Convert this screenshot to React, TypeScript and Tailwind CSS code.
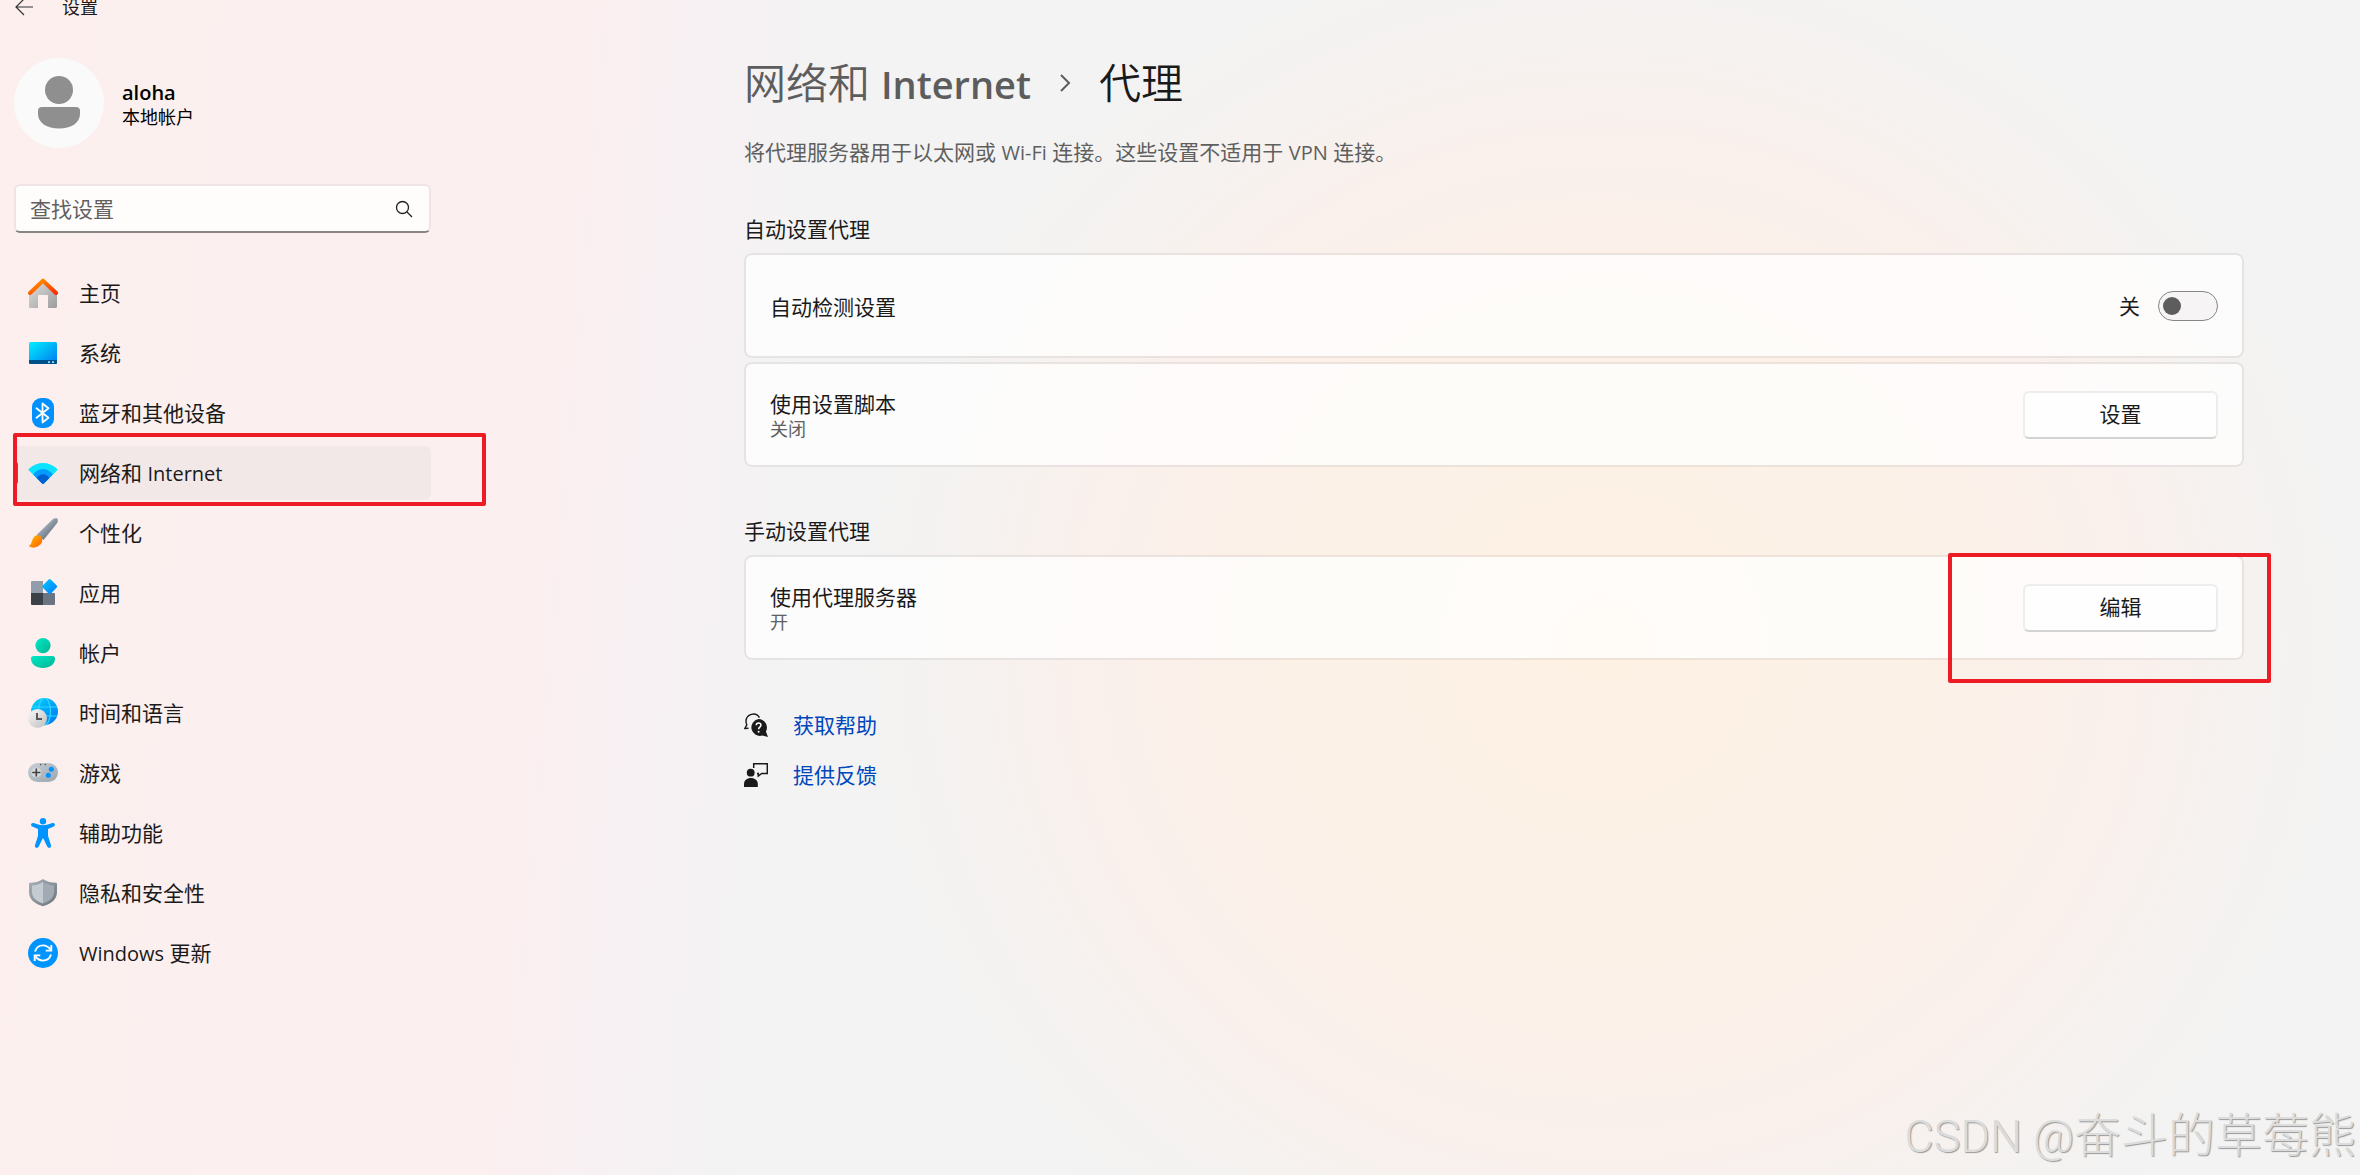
import { useState } from "react";
import type { ReactNode } from "react";

function HomeIcon() {
  return (
    <svg viewBox="0 0 30 30" className="size-[30px]" aria-hidden="true">
      <defs>
        <linearGradient id="homeBody" x1="0" y1="0" x2="1" y2="1">
          <stop offset="0" stopColor="#e0e0e0" />
          <stop offset="1" stopColor="#9c9c9c" />
        </linearGradient>
        <linearGradient id="homeRoof" x1="0" y1="0" x2="1" y2="1">
          <stop offset="0" stopColor="#ff9d00" />
          <stop offset="1" stopColor="#ff2a00" />
        </linearGradient>
      </defs>
      <path d="M1 15 15 3l14 12v13.5a1.500 1.500 0 0 1-1.500 1.500H20V18a1 1 0 0 0-1-1h-8a1 1 0 0 0-1 1v12H2.500A1.500 1.500 0 0 1 1 28.500z" fill="url(#homeBody)" />
      <path d="M2 15 15 2.600 28 15" fill="none" stroke="url(#homeRoof)" strokeWidth="4" strokeLinecap="round" strokeLinejoin="round" />
    </svg>
  );
}

function SystemIcon() {
  return (
    <svg viewBox="0 0 30 30" className="size-[30px]" aria-hidden="true">
      <defs>
        <linearGradient id="sys" x1="0" y1="0" x2="1" y2="1">
          <stop offset="0" stopColor="#00f0ff" />
          <stop offset="1" stopColor="#0078f0" />
        </linearGradient>
      </defs>
      <rect x="1" y="4" width="28" height="22" rx="1.500" fill="url(#sys)" />
      <path d="M1 22h28v2.500a1.500 1.500 0 0 1-1.500 1.500h-25A1.500 1.500 0 0 1 1 24.500z" fill="#00508a" />
      <path d="M20 23.200h2v1.800h-2zM24 23.200h2v1.800h-2z" fill="#9fd8ff" />
    </svg>
  );
}

function BluetoothIcon() {
  return (
    <svg viewBox="0 0 30 30" className="size-[30px]" aria-hidden="true">
      <rect x="4" width="22" height="30" rx="9" fill="#0091ff" />
      <path d="M8.500 10.200 20.500 19.800 14.500 24.500V5.500L20.500 10.200 8.500 19.800" fill="none" stroke="#fff" strokeWidth="1.800" strokeLinejoin="round" strokeLinecap="round" />
    </svg>
  );
}

function NetworkIcon() {
  return (
    <svg viewBox="0 0 30 30" className="size-[30px]" aria-hidden="true">
      <path d="M1 12.400a1 1 0 0 1 0-1.600C5 7 10 5 15 5s10 2 14 5.800a1 1 0 0 1 0 1.600L15.900 25.500a1.300 1.300 0 0 1-1.800 0z" fill="#0be3ff" />
      <path d="M5.200 16.600C7.800 13.200 11 11 15 11s7.200 2.200 9.800 5.600l-8.900 8.900a1.300 1.300 0 0 1-1.800 0z" fill="#009cff" />
      <path d="M8.600 20C10.300 17.600 12.400 16.200 15 16.200s4.700 1.400 6.400 3.800l-5.500 5.500a1.300 1.300 0 0 1-1.800 0z" fill="#0060d2" />
    </svg>
  );
}

function BrushIcon() {
  return (
    <svg viewBox="0 0 30 30" className="size-[30px]" aria-hidden="true">
      <defs>
        <linearGradient id="handle" x1="0" y1="0" x2="1" y2="1">
          <stop offset="0.200" stopColor="#b4bfcb" />
          <stop offset="0.800" stopColor="#5f6b78" />
        </linearGradient>
        <linearGradient id="bristle" x1="0" y1="0" x2="1" y2="1">
          <stop offset="0" stopColor="#ffc000" />
          <stop offset="1" stopColor="#ff5a00" />
        </linearGradient>
      </defs>
      <path d="M8.500 17 24.500 1.500c1.300-1.300 3.200-1.600 4.800-.9.900 1.400.7 3.200-.3 4.600L15.500 22z" fill="url(#handle)" />
      <path d="M6 19c2-2.500 5.800-2.200 7.500.2 1.400 2.200.8 5.500-1.300 7.400C9.500 29.600 4.500 30.600 1.300 28.600c-.7-.5-.4-1.100.3-1.300C4 26.400 3.300 22.100 6 19z" fill="url(#bristle)" />
    </svg>
  );
}

function AppsIcon() {
  return (
    <svg viewBox="0 0 30 30" className="size-[30px]" aria-hidden="true">
      <defs>
        <linearGradient id="diamond" x1="0" y1="0" x2="1" y2="1">
          <stop offset="0" stopColor="#00c8ff" />
          <stop offset="1" stopColor="#007bff" />
        </linearGradient>
      </defs>
      <path d="M4 3h11v12H3V4a1 1 0 0 1 1-1z" fill="#929dab" />
      <path d="M3 15h12v12H4a1 1 0 0 1-1-1z" fill="#3c4147" />
      <path d="M15 15h11a1 1 0 0 1 1 1v10a1 1 0 0 1-1 1H15z" fill="#6b7581" />
      <path d="M20.700 1.400a1.400 1.400 0 0 1 2 0l6 6.200a1.400 1.400 0 0 1 0 2l-6 6.200a1.400 1.400 0 0 1-2 0l-6-6.200a1.400 1.400 0 0 1 0-2z" fill="url(#diamond)" />
    </svg>
  );
}

function AccountIcon() {
  return (
    <svg viewBox="0 0 30 30" className="size-[30px]" aria-hidden="true">
      <defs>
        <linearGradient id="acct" x1="0" y1="0" x2="1" y2="1">
          <stop offset="0" stopColor="#00eac6" />
          <stop offset="1" stopColor="#00b494" />
        </linearGradient>
      </defs>
      <circle cx="15" cy="7.600" r="7.600" fill="url(#acct)" />
      <path d="M5.500 18h19a2.500 2.500 0 0 1 2.500 2.500c0 6-5.500 9.500-12 9.500S3 26.500 3 20.500A2.500 2.500 0 0 1 5.500 18z" fill="url(#acct)" />
    </svg>
  );
}

function TimeIcon() {
  return (
    <svg viewBox="0 0 30 30" className="size-[30px]" aria-hidden="true">
      <defs>
        <linearGradient id="globe" x1="0" y1="0" x2="1" y2="1">
          <stop offset="0" stopColor="#00d9ff" />
          <stop offset="1" stopColor="#0072f0" />
        </linearGradient>
        <linearGradient id="clock" x1="0" y1="0" x2="1" y2="1">
          <stop offset="0" stopColor="#fafafa" />
          <stop offset="1" stopColor="#bdbdbd" />
        </linearGradient>
      </defs>
      <circle cx="16.500" cy="13.500" r="13.500" fill="url(#globe)" />
      <g fill="none" stroke="#35d6ff" strokeWidth="1.200">
        <ellipse cx="16.500" cy="13.500" rx="6" ry="13.500" />
        <path d="M4 9h25M4 18h25" />
      </g>
      <circle cx="9.500" cy="20.500" r="9.500" fill="url(#clock)" />
      <path d="M9 15v6h5" fill="none" stroke="#555" strokeWidth="1.900" />
    </svg>
  );
}

function GameIcon() {
  return (
    <svg viewBox="0 0 30 30" className="size-[30px]" aria-hidden="true">
      <defs>
        <linearGradient id="pad" x1="0" y1="0" x2="1" y2="1">
          <stop offset="0" stopColor="#c9d0d6" />
          <stop offset="1" stopColor="#9aa5ae" />
        </linearGradient>
      </defs>
      <rect y="5" width="30" height="19" rx="9.500" fill="url(#pad)" />
      <circle cx="8.300" cy="14.500" r="5" fill="#d3d8dc" />
      <path d="M8.300 11v7M4.800 14.500h7" stroke="#444" strokeWidth="1.600" strokeLinecap="round" />
      <circle cx="23.300" cy="11.300" r="2.500" fill="#0091ff" />
      <circle cx="20.300" cy="17.300" r="2.500" fill="#0091ff" />
      <circle cx="12.700" cy="6.600" r="0.800" fill="#555" />
      <circle cx="17.200" cy="6.600" r="0.800" fill="#555" />
    </svg>
  );
}

function AccessibilityIcon() {
  return (
    <svg viewBox="0 0 30 30" className="size-[30px]" aria-hidden="true">
      <g fill="#0094ff">
        <circle cx="15" cy="3.200" r="3.200" />
        <path d="M5.700 5c2.800 1.100 6 2.300 9.300 2.300S21.500 6.100 24.300 5c2.500-.8 3.700 2.600 1.400 3.600L20 11v6.800l3 9.500c.6 2.500-2.700 3.600-3.800 1.300L15.600 21c-.3-.6-.9-.6-1.200 0l-3.600 7.600C9.700 30.900 6.400 29.800 7 27.300l3-9.500V11L4.300 8.600C2 7.600 3.200 4.200 5.700 5z" />
      </g>
    </svg>
  );
}

function ShieldIcon() {
  return (
    <svg viewBox="0 0 30 30" className="size-[30px]" aria-hidden="true">
      <defs>
        <linearGradient id="shieldRim" x1="0" y1="0" x2="1" y2="1">
          <stop offset="0" stopColor="#aab2b9" />
          <stop offset="1" stopColor="#6c747c" />
        </linearGradient>
      </defs>
      <path d="M15 1c4 2.800 8.500 3.800 12.800 3.800.7 0 1.200.5 1.200 1.200v8c0 7-5 11.500-13.300 14.100a2 2 0 0 1-1.400 0C6 25.500 1 21 1 14V6c0-.7.500-1.200 1.200-1.200C6.500 4.800 11 3.800 15 1z" fill="url(#shieldRim)" />
      <path d="M15 4C11.500 6.300 7.500 7.300 4 7.500V14c0 5.500 4 9 11 11.500z" fill="#c5ccd1" />
      <path d="M15 4c3.500 2.300 7.500 3.300 11 3.500V14c0 5.500-4 9-11 11.500z" fill="#a2abb3" />
    </svg>
  );
}

function UpdateIcon() {
  return (
    <svg viewBox="0 0 30 30" className="size-[30px]" aria-hidden="true">
      <circle cx="15" cy="15" r="15" fill="#0094ff" />
      <g fill="none" stroke="#fff" strokeWidth="1.900">
        <path d="M7 13.500C8.300 9.500 11.300 7.400 15 7.400c3.200 0 5.600 1.500 7.600 4.200" />
        <path d="M23.300 7v5.600h-5.600" />
        <path d="M23 16.500c-1.300 4-4.300 6.100-8 6.100-3.200 0-5.600-1.500-7.600-4.200" />
        <path d="M6.700 23v-5.600h5.600" />
      </g>
    </svg>
  );
}

function HelpIcon() {
  return (
    <svg viewBox="0 0 24 24" className="size-6" aria-hidden="true">
      <path d="M15.500 4.600A7.300 7.300 0 0 0 2 8.300c0 1.300.2 2.500.8 3.600L.8 15.500l3.700-.3" fill="none" stroke="#1a1a1a" strokeWidth="1.400" />
      <path d="M14.500 6a8.500 8.500 0 0 1 7.400 12.600L24 24l-5.600-1.500A8.500 8.500 0 1 1 14.500 6z" fill="#1a1a1a" />
      <path d="M12.300 12.300c0-3 4.600-2.900 4.600-.1 0 1.900-2.300 1.900-2.300 4" fill="none" stroke="#fff" strokeWidth="1.500" />
      <circle cx="14.600" cy="18.700" r="1" fill="#fff" />
    </svg>
  );
}

function FeedbackIcon() {
  return (
    <svg viewBox="0 0 24 24" className="size-6" aria-hidden="true">
      <circle cx="6.700" cy="9.700" r="3.900" fill="#1a1a1a" />
      <path d="M6.900 15c4 0 6.900 2.500 6.900 6v3H0v-3c0-3.500 2.900-6 6.900-6z" fill="#1a1a1a" />
      <path d="M9.700 5V.8h13.600v9.700h-5.600L14.300 13v-2.500H13" fill="none" stroke="#1a1a1a" strokeWidth="1.500" />
    </svg>
  );
}

// Latin runs sit a little smaller than the Chinese glyphs around them
function Latin({ children }: { children: ReactNode }) {
  return <span className="text-[20px]">{children}</span>;
}

const navItems = [
  { label: "主页", icon: <HomeIcon /> },
  { label: "系统", icon: <SystemIcon /> },
  { label: "蓝牙和其他设备", icon: <BluetoothIcon /> },
  { label: <>网络和 <Latin>Internet</Latin></>, icon: <NetworkIcon />, active: true },
  { label: "个性化", icon: <BrushIcon /> },
  { label: "应用", icon: <AppsIcon /> },
  { label: "帐户", icon: <AccountIcon /> },
  { label: "时间和语言", icon: <TimeIcon /> },
  { label: "游戏", icon: <GameIcon /> },
  { label: "辅助功能", icon: <AccessibilityIcon /> },
  { label: "隐私和安全性", icon: <ShieldIcon /> },
  { label: <><Latin>Windows</Latin> 更新</>, icon: <UpdateIcon /> },
];

function Sidebar() {
  return (
    <aside className="w-[431px] shrink-0 pl-3.5">
      <header className="flex h-3.5 items-center">
        <button aria-label="返回" className="text-[#333]">
          <svg viewBox="0 0 20 20" className="size-5" fill="none" stroke="currentColor" strokeWidth="1.200" aria-hidden="true">
            <path d="M19 10H2M10 2l-8 8 8 8" />
          </svg>
        </button>
        <span className="ml-7 text-[18px] leading-none">设置</span>
      </header>

      <div className="mt-11 flex items-center gap-[18px]">
        <svg viewBox="0 0 90 90" className="size-[90px]" aria-hidden="true">
          <circle cx="45" cy="45" r="45" fill="#fafafa" />
          <circle cx="45" cy="32" r="14" fill="#8f8f8f" />
          <path d="M28 49h34a4 4 0 0 1 4 4v3c0 9-9 14.500-21 14.500S24 65 24 56v-3a4 4 0 0 1 4-4z" fill="#8f8f8f" />
        </svg>
        <div className="pt-1 text-black">
          <p className="text-[20px] leading-6 font-semibold">aloha</p>
          <p className="text-[18px] leading-6">本地帐户</p>
        </div>
      </div>

      <div className="mt-9 flex h-[49px] items-center rounded-md border-2 border-b-[#8b8485] border-[#efe3e3] bg-[#fffdfb] pr-4 pl-3.5">
        <input
          type="text"
          aria-label="查找设置"
          placeholder="查找设置"
          className="min-w-0 flex-1 bg-transparent pt-0.5 text-[21px] outline-none placeholder:text-[#626060]"
        />
        <svg viewBox="0 0 18 18" className="size-[18px]" fill="none" stroke="#222" strokeWidth="1.300" aria-hidden="true">
          <circle cx="7.500" cy="7.500" r="6" />
          <path d="m12 12 5 5" />
        </svg>
      </div>

      <nav className="mt-[33px] flex flex-col gap-1.5">
        {navItems.map((item, i) => (
          <a
            key={i}
            href="#"
            aria-current={item.active ? "page" : undefined}
            className={`relative flex h-[54px] items-center gap-[21px] rounded-md pl-3.5 text-[21px] ${item.active ? "bg-[#f3e8e8]" : ""}`}
          >
            {item.active && <span className="absolute top-4 left-0 h-[22px] w-1 rounded-sm bg-[#3a6fc4]" />}
            {item.icon}
            <span className="pt-0.5">{item.label}</span>
            {item.active && <span className="absolute -top-[13px] -right-[55px] -bottom-1.5 -left-px rounded-xs border-4 border-[#ed1c24]" />}
          </a>
        ))}
      </nav>
    </aside>
  );
}

function SettingCard({ title, status, htmlFor, children }: {
  title: string;
  status?: string;
  htmlFor?: string;
  children: ReactNode;
}) {
  return (
    <div className="relative flex h-[105px] items-center justify-between rounded-lg border-2 border-black/6 bg-white/75 bg-clip-padding px-6">
      <div className="flex flex-col pt-0.5">
        <label htmlFor={htmlFor} className="text-[21px] leading-[26px]">{title}</label>
        {status && <span className="text-[18px] leading-6 text-[#606060]">{status}</span>}
      </div>
      {children}
    </div>
  );
}

function CardButton({ id, children }: { id: string; children: ReactNode }) {
  return (
    <button
      id={id}
      className="h-12 w-[195px] rounded-md border-2 border-b-[#d3d3d3] border-[#ededed] bg-[#fefefe] text-[21px]"
    >
      {children}
    </button>
  );
}

function ProxyPage() {
  const [autoDetect, setAutoDetect] = useState(false);

  return (
    <main className="min-w-0 flex-1 pt-[55px] pr-[116px] pl-[313px]">
      <h1 className="flex h-14 items-center text-[42px] leading-[56px] font-[350]">
        <a href="#" className="text-[#5d5d5d]">
          网络和 <span className="text-[38px] font-semibold">Internet</span>
        </a>
        <svg viewBox="0 0 12 18" className="mx-7 h-[18px] w-3" fill="none" stroke="#5d5d5d" strokeWidth="2" aria-hidden="true">
          <path d="m2 1 8 8-8 8" />
        </svg>
        <span>代理</span>
      </h1>
      <p className="mt-[25px] text-[21px] leading-8 text-[#5f5f5f]">
        将代理服务器用于以太网或 <Latin>Wi-Fi</Latin> 连接。这些设置不适用于 <Latin>VPN</Latin> 连接。
      </p>

      <section className="mt-11">
        <h2 className="text-[21px] leading-8">自动设置代理</h2>
        <div className="mt-2 flex flex-col gap-1">
          <SettingCard title="自动检测设置" htmlFor="auto-detect">
            <div className="flex items-center gap-[18px]">
              <span className="pt-0.5 text-[21px]">{autoDetect ? "开" : "关"}</span>
              <input
                id="auto-detect"
                type="checkbox"
                role="switch"
                checked={autoDetect}
                onChange={(e) => setAutoDetect(e.target.checked)}
                className="flex h-[30px] w-[60px] appearance-none items-center rounded-full border border-[#868686] bg-[#f6f4f4] px-1 before:size-[18px] before:rounded-full before:bg-[#5d5d5d] checked:justify-end"
              />
            </div>
          </SettingCard>
          <SettingCard title="使用设置脚本" status="关闭" htmlFor="script">
            <CardButton id="script">设置</CardButton>
          </SettingCard>
        </div>
      </section>

      <section className="mt-12">
        <h2 className="text-[21px] leading-8">手动设置代理</h2>
        <div className="mt-2">
          <SettingCard title="使用代理服务器" status="开" htmlFor="manual">
            <CardButton id="manual">编辑</CardButton>
            <span className="pointer-events-none absolute -top-1 -right-[29px] -bottom-[25px] w-[323px] rounded-xs border-4 border-[#ed1c24]" />
          </SettingCard>
        </div>
      </section>

      <ul className="mt-[49px] flex flex-col gap-[18px] text-[21px] leading-8 text-[#0046bd]">
        <li>
          <a href="#" className="flex items-center gap-[25px]"><HelpIcon />获取帮助</a>
        </li>
        <li>
          <a href="#" className="flex items-center gap-[25px]"><FeedbackIcon />提供反馈</a>
        </li>
      </ul>
    </main>
  );
}

export default function App() {
  return (
    <div className="relative flex min-h-screen overflow-hidden bg-[#f3f3f3] bg-[radial-gradient(ellipse_27%_52%_at_68%_55%,#fdf1e4_0%,#fcf1e7_50%,#faf0ec_82%,#f5f2f0_102%,transparent_120%),linear-gradient(95deg,#fcefee_0%,#fbeff0_24%,#f7f1f3_29%,#f3f3f3_34%,#f3f3f3_100%)] font-['Open_Sans','Noto_Sans_CJK_SC',sans-serif] text-[#1a1a1a]">
      <Sidebar />
      <ProxyPage />
      <p className="pointer-events-none absolute right-1 bottom-1 font-['Roboto','Noto_Sans_CJK_SC',sans-serif] text-[47px] leading-[68px] font-light text-[#dcdcdc] [text-shadow:1px_1px_1px_#999]">
        <span className="text-[45px]">CSDN @</span>奋斗的草莓熊
      </p>
    </div>
  );
}
